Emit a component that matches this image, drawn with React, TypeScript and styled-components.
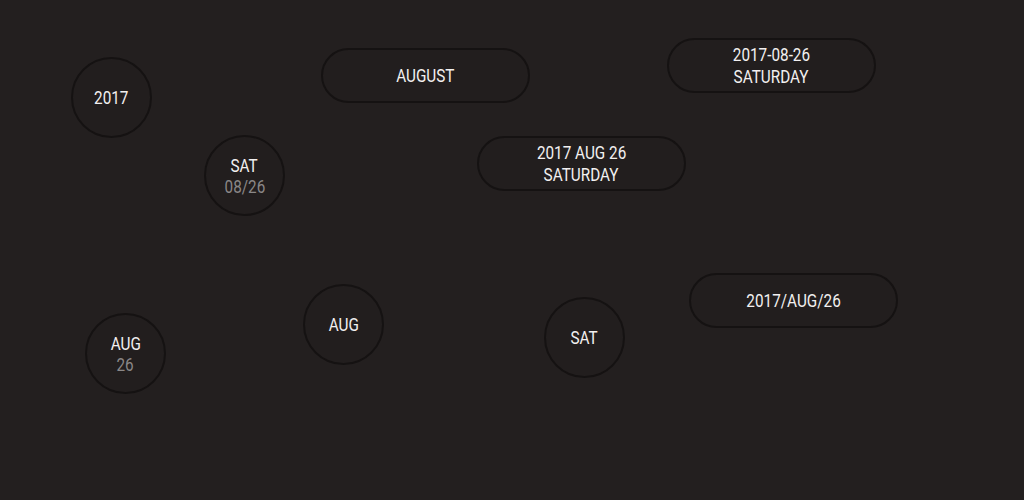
import React from "react";
import styled, { createGlobalStyle, css } from "styled-components";

const Global = createGlobalStyle`
  html, body { margin: 0; padding: 0; background: #231f1f; }
  #root { width: 1024px; height: 500px; }
`;

const Canvas = styled.div`
  position: relative;
  width: 1024px;
  height: 500px;
  background: #231f1f;
  overflow: hidden;
  font-family: Roboto, "Liberation Sans", sans-serif;
`;

const Node = styled.div<{ $x: number; $y: number; $shape: "circle" | "pill" }>`
  position: absolute;
  left: ${(p) => p.$x}px;
  top: ${(p) => p.$y}px;
  box-sizing: border-box;
  border: 2px solid #151212;
  background: #221e1e;
  display: flex;
  flex-direction: column;
  align-items: center;
  justify-content: center;
  ${(p) =>
    p.$shape === "circle"
      ? css`
          width: 81px;
          height: 81px;
          border-radius: 50%;
        `
      : css`
          width: 209px;
          height: 55px;
          border-radius: 28px;
        `}
`;

const Line = styled.span<{ $muted?: boolean; $lh: number }>`
  display: block;
  font-size: 18px;
  line-height: ${(p) => p.$lh}px;
  color: ${(p) => (p.$muted ? "#8a8787" : "#f2f0f0")};
  transform: scaleX(0.85);
  white-space: nowrap;
`;

type Item = {
  x: number;
  y: number;
  shape: "circle" | "pill";
  lines: { t: string; muted?: boolean }[];
};

const items: Item[] = [
  { x: 71, y: 57, shape: "circle", lines: [{ t: "2017" }] },
  { x: 204, y: 135, shape: "circle", lines: [{ t: "SAT" }, { t: "08/26", muted: true }] },
  { x: 85, y: 313, shape: "circle", lines: [{ t: "AUG" }, { t: "26", muted: true }] },
  { x: 303, y: 284, shape: "circle", lines: [{ t: "AUG" }] },
  { x: 544, y: 297, shape: "circle", lines: [{ t: "SAT" }] },
  { x: 321, y: 48, shape: "pill", lines: [{ t: "AUGUST" }] },
  { x: 667, y: 38, shape: "pill", lines: [{ t: "2017-08-26" }, { t: "SATURDAY" }] },
  { x: 477, y: 136, shape: "pill", lines: [{ t: "2017 AUG 26" }, { t: "SATURDAY" }] },
  { x: 689, y: 273, shape: "pill", lines: [{ t: "2017/AUG/26" }] },
];

export default function App() {
  return (
    <>
      <Global />
      <Canvas>
        {items.map((it, i) => (
          <Node key={i} $x={it.x} $y={it.y} $shape={it.shape}>
            {it.lines.map((l, j) => (
              <Line key={j} $muted={l.muted} $lh={it.shape === "circle" ? 21 : 22}>
                {l.t}
              </Line>
            ))}
          </Node>
        ))}
      </Canvas>
    </>
  );
}
